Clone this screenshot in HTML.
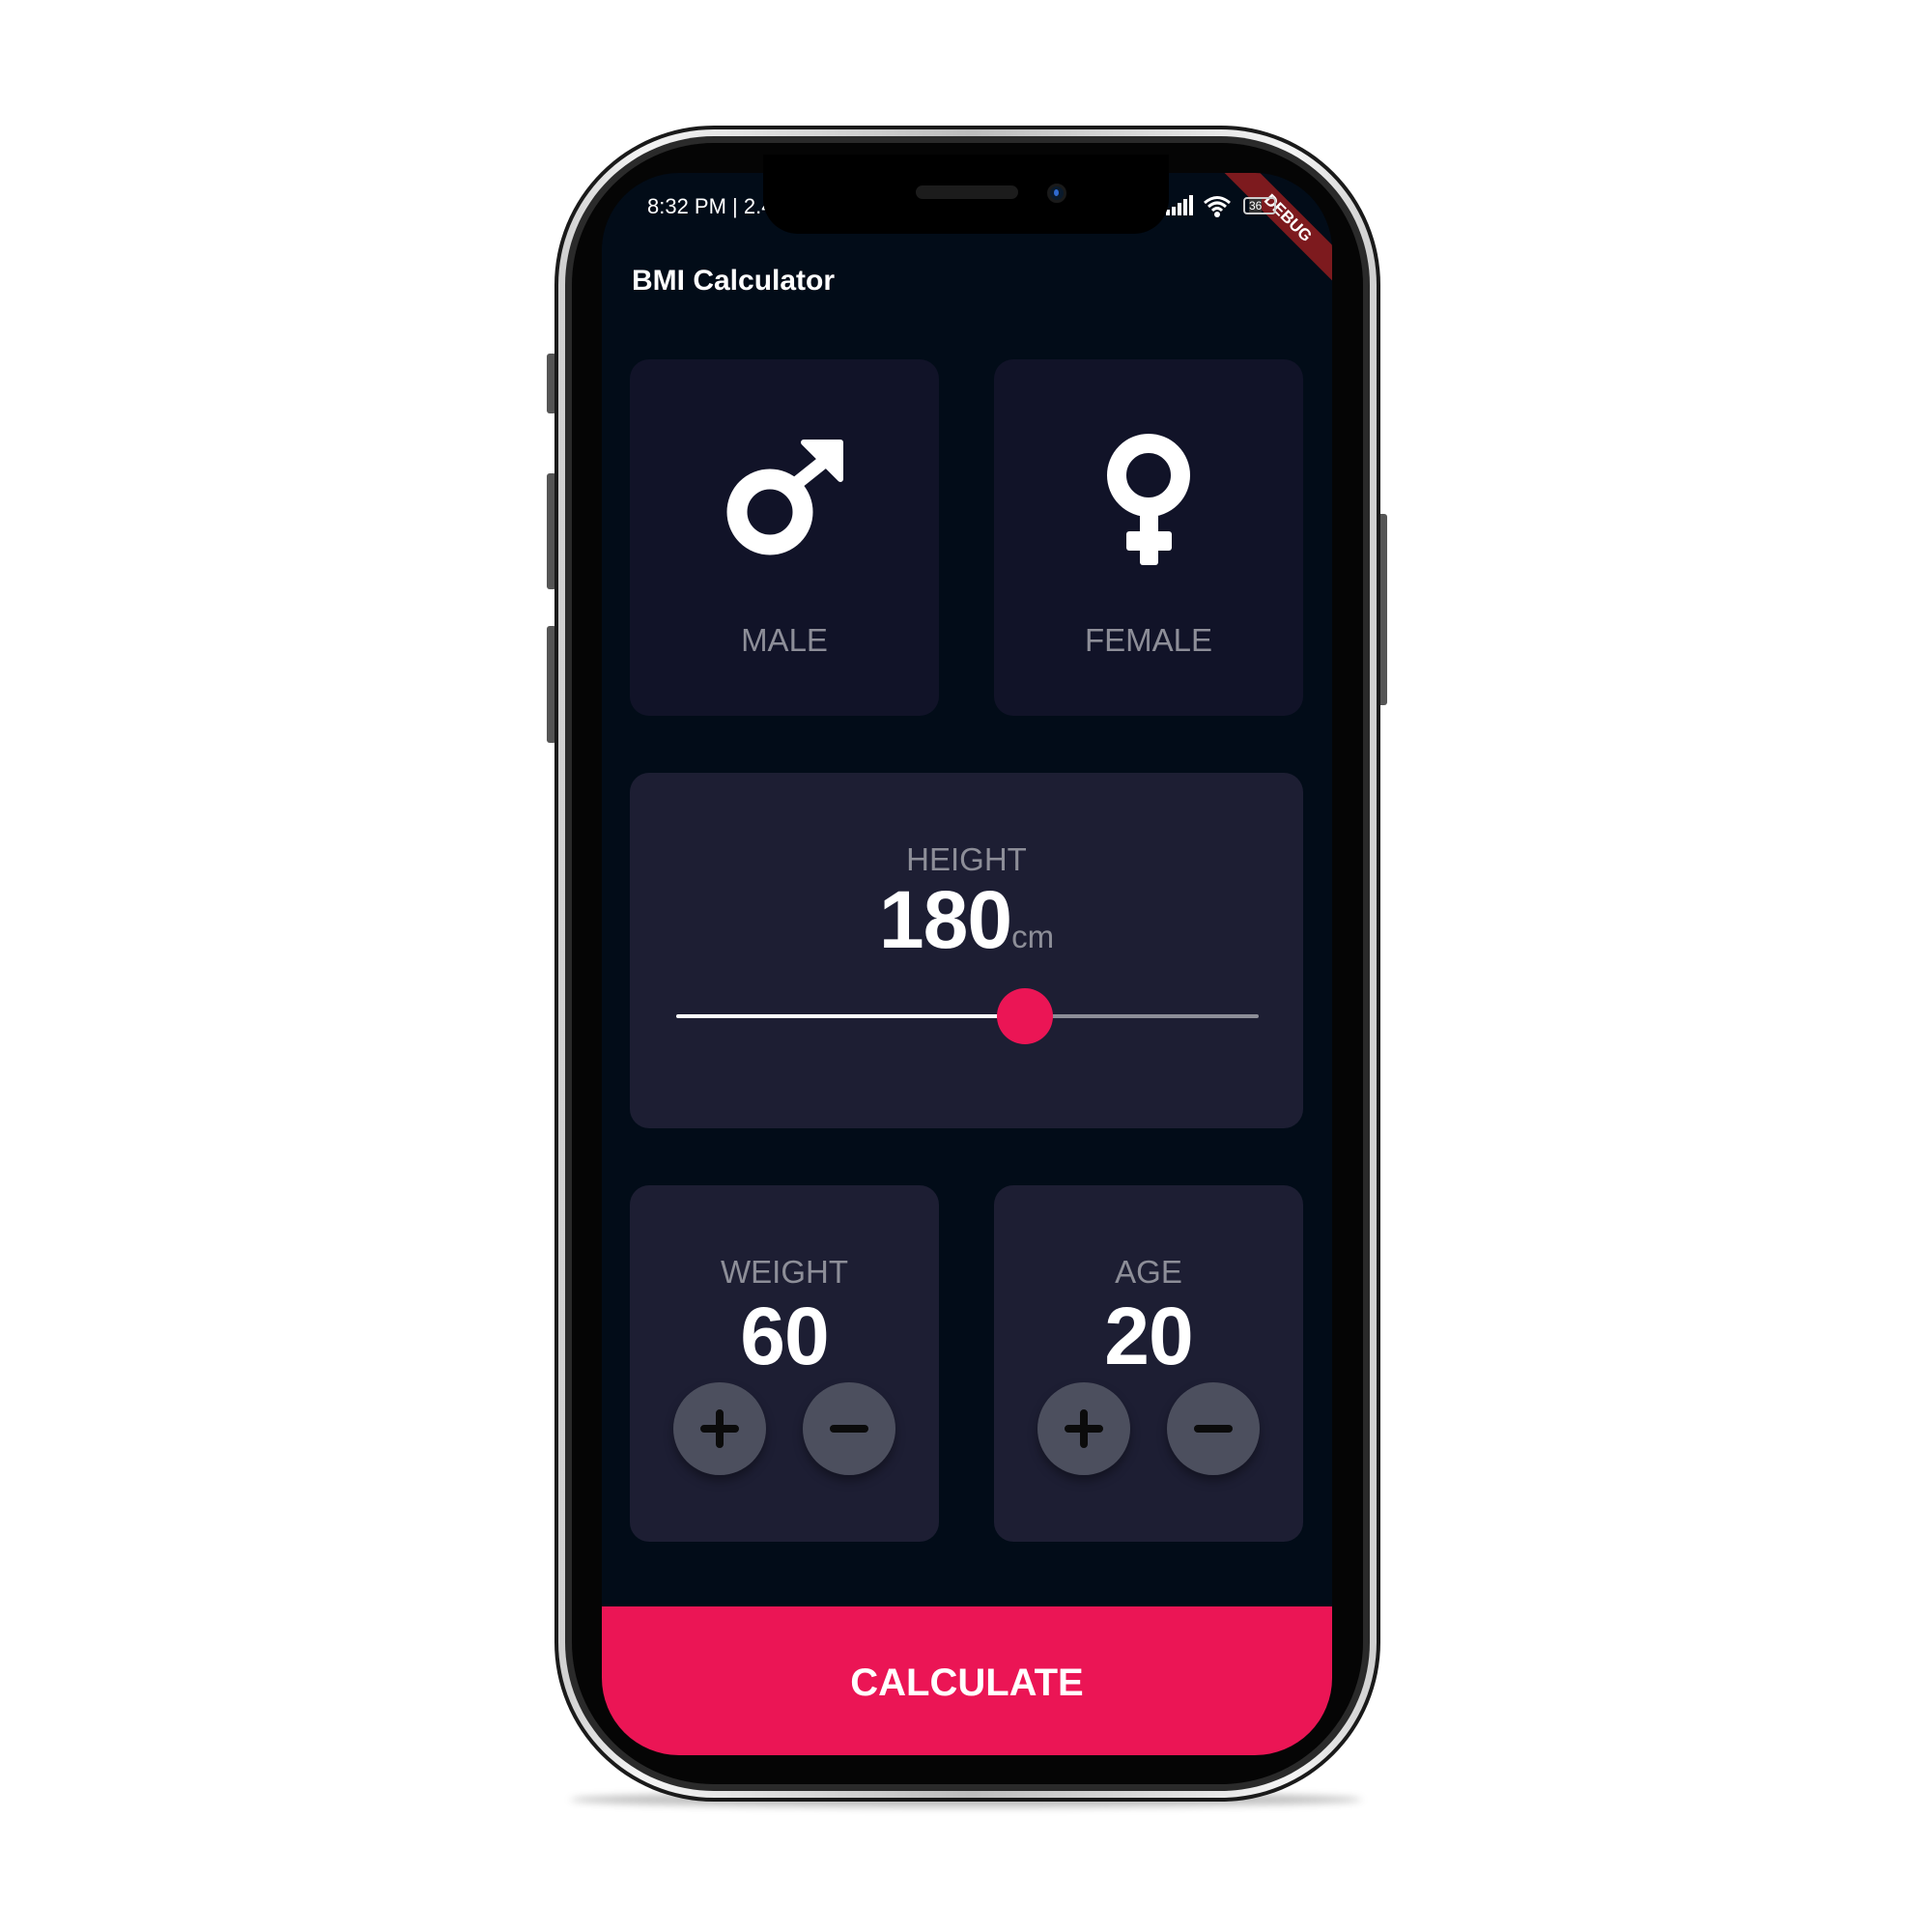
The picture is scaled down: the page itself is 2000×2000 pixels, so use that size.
<!DOCTYPE html>
<html><head><meta charset="utf-8"><style>
*{margin:0;padding:0;box-sizing:border-box}
body{width:2000px;height:2000px;background:#fff;position:relative;overflow:hidden;font-family:"Liberation Sans",sans-serif}
.abs{position:absolute}
.card{position:absolute;border-radius:20px}
.lbl{position:absolute;color:#8d8e98;font-size:33px;text-align:center;width:100%}
.num{position:absolute;color:#fff;font-size:84px;font-weight:bold;text-align:center;width:100%;letter-spacing:-1px}
.btn{position:absolute;width:96px;height:96px;border-radius:50%;background:#4c4f5e;box-shadow:0 6px 10px rgba(0,0,0,.35)}
</style></head><body>
<div class="abs" style="left:566px;top:366px;width:10px;height:62px;background:#555;border-radius:3px"></div>
<div class="abs" style="left:566px;top:490px;width:10px;height:120px;background:#555;border-radius:3px"></div>
<div class="abs" style="left:566px;top:648px;width:10px;height:121px;background:#555;border-radius:3px"></div>
<div class="abs" style="left:1426px;top:532px;width:10px;height:198px;background:#555;border-radius:3px"></div>
<div class="abs" style="left:590px;top:1855px;width:820px;height:16px;border-radius:50%;background:rgba(0,0,0,.25);filter:blur(4px)"></div>
<div class="abs" style="left:574px;top:130px;width:855px;height:1735px;border-radius:165px;background:#1a1a1a"></div>
<div class="abs" style="left:578px;top:134px;width:847px;height:1727px;border-radius:161px;background:linear-gradient(90deg,#cfcfcf,#f4f4f4 10%,#bdbdbd 50%,#f4f4f4 90%,#cfcfcf)"></div>
<div class="abs" style="left:585px;top:141px;width:833px;height:1713px;border-radius:154px;background:#2a2a2a"></div>
<div class="abs" style="left:592px;top:148px;width:819px;height:1699px;border-radius:147px;background:#050505"></div>
<div class="abs" style="left:623px;top:179px;width:756px;height:1638px;border-radius:80px;background:#020c18;overflow:hidden">
  <div class="abs" style="left:610px;top:34px;width:200px;height:26px;background:#7d1a1e;transform:rotate(45deg);transform-origin:center;color:#fff;font-size:17px;font-weight:bold;text-align:center;line-height:26px">DEBUG</div>
  <div class="abs" style="left:47px;top:22px;color:#fff;font-size:22px">8:32 PM | 2.4</div>
  <div class="abs" style="left:584px;top:38px;width:4px;height:6px;background:#fff"></div>
  <div class="abs" style="left:590px;top:35px;width:4px;height:9px;background:#fff"></div>
  <div class="abs" style="left:596px;top:31px;width:4px;height:13px;background:#fff"></div>
  <div class="abs" style="left:602px;top:27px;width:4px;height:17px;background:#fff"></div>
  <div class="abs" style="left:608px;top:23px;width:4px;height:21px;background:#fff"></div>
  <svg class="abs" style="left:622px;top:22px" width="32" height="26" viewBox="0 0 32 26"><path d="M2 9 Q15 -2 28 9 M6 13 Q15 5 24 13 M10 17 Q15 12 20 17" stroke="#fff" stroke-width="3" fill="none"/><circle cx="15" cy="21" r="3" fill="#fff"/></svg>
  <div class="abs" style="left:664px;top:25px;width:34px;height:18px;border:2px solid #ccc;border-radius:4px;color:#fff;font-size:12px;line-height:14px;padding-left:4px"><span style="background:#333">36</span></div>
  <div class="abs" style="left:31px;top:95px;color:#fff;font-size:30px;font-weight:bold">BMI Calculator</div>
  <div class="abs" style="left:0;top:1484px;width:756px;height:160px;background:#eb1555;color:#fff;font-size:40px;font-weight:bold;text-align:center;line-height:158px">CALCULATE</div>
</div>
<div class="abs" style="left:790px;top:160px;width:420px;height:82px;background:#000;border-radius:0 0 36px 36px"></div>
<div class="abs" style="left:948px;top:192px;width:106px;height:14px;background:#1c1c1c;border-radius:7px"></div>
<div class="abs" style="left:1084px;top:190px;width:20px;height:20px;background:#0a1a2c;border-radius:50%;border:3px solid #1a1a1a"></div>
<div class="abs" style="left:1091px;top:196px;width:5px;height:7px;background:#2f6ad0;border-radius:50%"></div>

<div class="card" style="left:652px;top:372px;width:320px;height:369px;background:#111328">
  <svg class="abs" style="left:0;top:0" width="320" height="369" viewBox="0 0 320 369">
    <circle cx="145" cy="158" r="34" stroke="#fff" stroke-width="21" fill="none"/>
    <line x1="168" y1="132" x2="208" y2="100" stroke="#fff" stroke-width="14"/>
    <path d="M180 86 L218 86 L218 124 Z" fill="#fff" stroke="#fff" stroke-width="6" stroke-linejoin="round"/>
  </svg>
  <div class="lbl" style="top:272px">MALE</div>
</div>
<div class="card" style="left:1029px;top:372px;width:320px;height:369px;background:#111328">
  <svg class="abs" style="left:0;top:0" width="320" height="369" viewBox="0 0 320 369">
    <circle cx="160" cy="120" r="33" stroke="#fff" stroke-width="20" fill="none"/>
    <rect x="151" y="160" width="19" height="53" rx="3" fill="#fff"/>
    <rect x="137" y="178" width="47" height="20" rx="3" fill="#fff"/>
  </svg>
  <div class="lbl" style="top:272px">FEMALE</div>
</div>
<div class="card" style="left:652px;top:800px;width:697px;height:368px;background:#1d1e33">
  <div class="lbl" style="top:71px">HEIGHT</div>
  <div class="abs" style="left:0;top:104px;width:100%;text-align:center;color:#fff">
    <span style="font-size:84px;font-weight:bold;letter-spacing:-1px">180</span><span style="font-size:33px;color:#8d8e98">cm</span>
  </div>
  <div class="abs" style="left:48px;top:250px;width:362px;height:4px;background:#fff;border-radius:2px"></div>
  <div class="abs" style="left:410px;top:250px;width:241px;height:4px;background:#8d8e98;border-radius:2px"></div>
  <div class="abs" style="left:380px;top:223px;width:58px;height:58px;border-radius:50%;background:#eb1555"></div>
</div>
<div class="card" style="left:652px;top:1227px;width:320px;height:369px;background:#1d1e33">
  <div class="lbl" style="top:71px">WEIGHT</div>
  <div class="num" style="top:108px">60</div>
  <div class="btn" style="left:45px;top:204px"><svg width="96" height="96"><path d="M48 32V64M32 48H64" stroke="#0b0b0b" stroke-width="8" stroke-linecap="round"/></svg></div>
  <div class="btn" style="left:179px;top:204px"><svg width="96" height="96"><path d="M32 48H64" stroke="#0b0b0b" stroke-width="8" stroke-linecap="round"/></svg></div>
</div>
<div class="card" style="left:1029px;top:1227px;width:320px;height:369px;background:#1d1e33">
  <div class="lbl" style="top:71px">AGE</div>
  <div class="num" style="top:108px">20</div>
  <div class="btn" style="left:45px;top:204px"><svg width="96" height="96"><path d="M48 32V64M32 48H64" stroke="#0b0b0b" stroke-width="8" stroke-linecap="round"/></svg></div>
  <div class="btn" style="left:179px;top:204px"><svg width="96" height="96"><path d="M32 48H64" stroke="#0b0b0b" stroke-width="8" stroke-linecap="round"/></svg></div>
</div>
</body></html>
